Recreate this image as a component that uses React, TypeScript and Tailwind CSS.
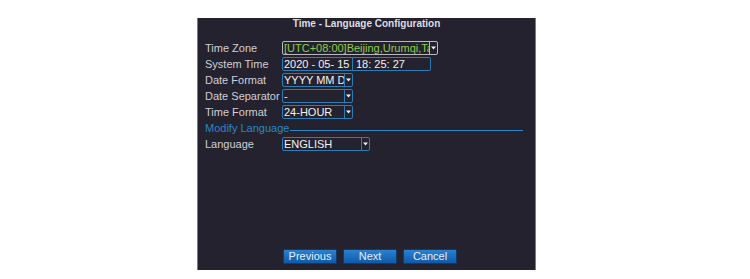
import type { ReactNode } from 'react';

const font = { fontFamily: '"Liberation Sans", Arial, sans-serif' };

export default function App() {
  return (
    <div className="w-[750px] h-[279px] bg-white pt-[18px]" style={font}>
      <div className="ml-[197px] w-[339px] h-[252px] bg-[#24222f] border-l border-r border-[#7c7b84] flex flex-col text-[11px] text-[#cfcfd6]">
        <div className="h-[12px] flex items-center justify-center font-bold text-[10px] text-[#dcdce2] leading-none">
          Time - Language Configuration
        </div>

        <div className="mt-[10px] pl-[7px] flex flex-col">
          <Row label="Time Zone">
            <Select width="w-[156px]" focused>
              <span className="text-[#8ccc45] whitespace-nowrap">[UTC+08:00]Beijing,Urumqi,Taipei</span>
            </Select>
          </Row>
          <Row label="System Time">
            <div className="w-[149px] h-[14px] border border-[#2a7db5] rounded-[2px] flex items-center text-[#f2f2f2] leading-none">
              <div className="w-[70px] h-full flex items-center pl-[1px] border-r border-[#2a7db5] whitespace-nowrap">
                2020 - 05- 15
              </div>
              <div className="pl-[3px] whitespace-nowrap">18: 25: 27</div>
            </div>
          </Row>
          <Row label="Date Format">
            <Select width="w-[71px]">YYYY MM DD</Select>
          </Row>
          <Row label="Date Separator">
            <Select width="w-[71px]">-</Select>
          </Row>
          <Row label="Time Format">
            <Select width="w-[71px]">24-HOUR</Select>
          </Row>
          <div className="h-[16px] flex items-center pr-[12px]">
            <span className="text-[#2b87c8] leading-none whitespace-nowrap">Modify Language</span>
            <div className="flex-1 h-px bg-[#2b87c8] ml-[1px] mt-[5px]" />
          </div>
          <Row label="Language">
            <Select width="w-[88px]">ENGLISH</Select>
          </Row>
        </div>

        <div className="mt-auto mb-[6px] ml-[85px] flex gap-[6px]">
          <Button>Previous</Button>
          <Button>Next</Button>
          <Button>Cancel</Button>
        </div>
      </div>
    </div>
  );
}

function Row({ label, children }: { label: string; children: ReactNode }) {
  return (
    <div className="h-[16px] flex items-center">
      <div className="w-[77px] leading-none whitespace-nowrap">{label}</div>
      {children}
    </div>
  );
}

function Select({
  width,
  focused,
  children,
}: {
  width: string;
  focused?: boolean;
  children: ReactNode;
}) {
  const border = focused ? 'border-[#b9b9bf]' : 'border-[#2a7db5]';
  return (
    <div className={`${width} h-[14px] border ${border} rounded-[2px] flex items-center leading-none`}>
      <div className="flex-1 h-full overflow-hidden flex items-center pl-[1px] text-[#f2f2f2] whitespace-nowrap">
        {children}
      </div>
      <div className={`w-[8px] h-full border-l ${border} flex items-center justify-center`}>
        <svg width="5" height="4" viewBox="0 0 5 4">
          <path d="M0 0.5 H5 L2.5 3.5 Z" fill="#f0f0f0" />
        </svg>
      </div>
    </div>
  );
}

function Button({ children }: { children: ReactNode }) {
  return (
    <div className="w-[54px] h-[15px] rounded-[1px] border border-[#0e3a6c] bg-gradient-to-b from-[#2a82d2] to-[#0f5aa8] text-[#e6eef8] flex items-center justify-center leading-none">
      {children}
    </div>
  );
}
